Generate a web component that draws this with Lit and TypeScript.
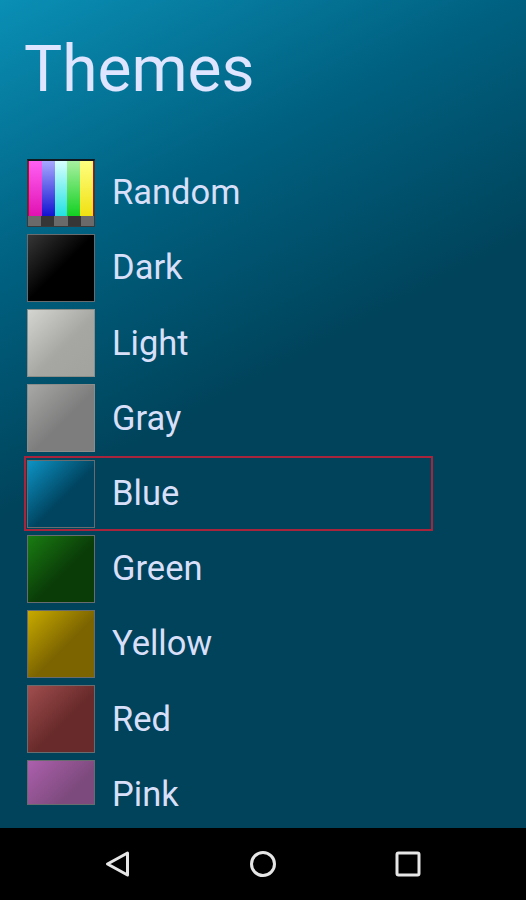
import { css, html, LitElement } from 'lit'
import { customElement } from 'lit/decorators.js'
import { classMap } from 'lit/directives/class-map.js'

type Theme = { name: string; swatch: string; selected?: boolean }

const THEMES: Theme[] = [
  { name: 'Random', swatch: 'random' },
  { name: 'Dark', swatch: 'dark' },
  { name: 'Light', swatch: 'light' },
  { name: 'Gray', swatch: 'gray' },
  { name: 'Blue', swatch: 'blue', selected: true },
  { name: 'Green', swatch: 'green' },
  { name: 'Yellow', swatch: 'yellow' },
  { name: 'Red', swatch: 'red' },
  { name: 'Pink', swatch: 'pink' },
]

@customElement('app-root')
export class AppRoot extends LitElement {
  static styles = css`
    :host {
      display: flex;
      flex-direction: column;
      width: 526px;
      height: 900px;
      font-family: Roboto, 'Liberation Sans', sans-serif;
      color: #d8dff9;
      overflow: hidden;
    }
    .screen {
      flex: 1;
      min-height: 0;
      display: flex;
      flex-direction: column;
      background: linear-gradient(152deg, #0a8fb5 0%, #006080 25%, #00435a 47%, #00435a 100%);
    }
    h1 {
      margin: 0;
      padding: 31px 0 0 24px;
      height: 155.2px;
      flex: none;
      box-sizing: border-box;
      font-size: 64px;
      line-height: 78px;
      font-weight: 400;
      color: #dfe4ff;
    }
    .list {
      flex: 1;
      min-height: 0;
      overflow: hidden;
      padding-left: 24px;
    }
    .row {
      box-sizing: border-box;
      width: 409px;
      height: 75.2px;
      display: flex;
      align-items: center;
      gap: 17px;
      padding-left: 1px;
      border: 2px solid transparent;
      font-size: 34.5px;
    }
    .row span:last-child {
      margin-top: -1px;
    }
    .row.selected {
      border-color: #a8243c;
    }
    .swatch {
      box-sizing: border-box;
      flex: none;
      width: 68px;
      height: 68px;
      border: 1px solid #686c6e;
    }
    .dark { background: linear-gradient(135deg, #363636 0%, #000 50%); }
    .light { background: linear-gradient(135deg, #d4d4d0 0%, #a6a6a2 55%, #a2a29e 100%); border-color: #8e8e88; }
    .gray { background: linear-gradient(135deg, #a8a8a6 0%, #7d7d7d 55%); border-color: #8c8c8a; }
    .blue { background: linear-gradient(135deg, #0d93c4 0%, #004460 55%); }
    .green { background: linear-gradient(135deg, #1a7c12 0%, #0a3c08 55%); }
    .yellow { background: linear-gradient(135deg, #c8aa00 0%, #7c6400 55%); }
    .red { background: linear-gradient(135deg, #a04e4e 0%, #682a2a 55%); }
    /* list is cut off by the nav bar, pink only shows its top part */
    .pink {
      background: linear-gradient(135deg, #ac60ac 0%, #7c4a7c 70%);
      height: 45px;
      align-self: flex-start;
      margin-top: 1.6px;
    }
    .random {
      display: flex;
      flex-direction: column;
      border-color: #3a3a3a;
      border-top: 2px solid #101820;
      background: #333;
    }
    .bars {
      flex: 1;
      display: flex;
      border-inline: 1px solid #b01028;
    }
    .bars i { flex: 1; }
    .bars i:nth-child(1) { background: linear-gradient(#ff60f4, #e010b0); }
    .bars i:nth-child(2) { background: linear-gradient(#a8a8ff, #1010d0); }
    .bars i:nth-child(3) { background: linear-gradient(#d8ffff, #20e0e0); }
    .bars i:nth-child(4) { background: linear-gradient(#a8f0a0, #10d020); }
    .bars i:nth-child(5) { background: linear-gradient(#ffff80, #f0e010); }
    .steps {
      height: 10px;
      display: flex;
    }
    .steps i { flex: 1; background: #6a6a6a; }
    .steps i:nth-child(even) { background: #363636; }
    nav {
      flex: none;
      height: 72px;
      background: #000;
      display: flex;
      align-items: center;
    }
    nav svg { display: block; flex: none; width: 28px; height: 28px; fill: none; stroke: #e6e6e6; stroke-width: 3; }
    .back { margin-left: 104px; }
    .home { margin-left: 117px; }
    .recent { margin-left: 117px; }
  `

  private renderSwatch(theme: Theme) {
    if (theme.swatch !== 'random') return html`<span class="swatch ${theme.swatch}"></span>`
    return html`<span class="swatch random">
      <span class="bars"><i></i><i></i><i></i><i></i><i></i></span>
      <span class="steps"><i></i><i></i><i></i><i></i><i></i></span>
    </span>`
  }

  render() {
    return html`<main class="screen">
        <h1>Themes</h1>
        <div class="list">
          ${THEMES.map(
            (t) => html`<div class=${classMap({ row: true, selected: !!t.selected })}>
              ${this.renderSwatch(t)}<span>${t.name}</span>
            </div>`
          )}
        </div>
      </main>
      <nav>
        <svg class="back" viewBox="0 0 28 28"><path d="M23.5 3 L3.5 14 L23.5 25 Z" stroke-linejoin="round" /></svg>
        <svg class="home" viewBox="0 0 28 28"><circle cx="14" cy="14" r="11.5" /></svg>
        <svg class="recent" viewBox="0 0 28 28"><rect x="3" y="3" width="22" height="22" rx="1.5" /></svg>
      </nav>`
  }
}
